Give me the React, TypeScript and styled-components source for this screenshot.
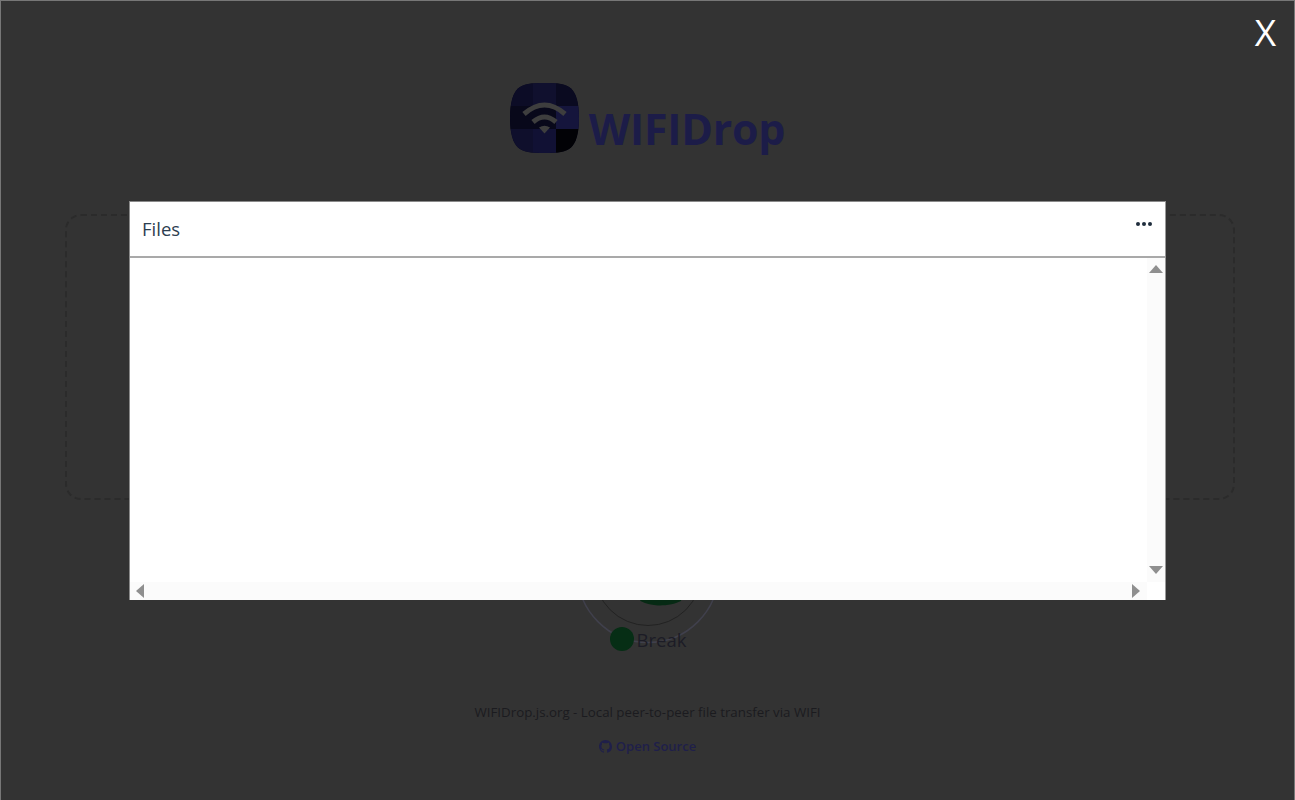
import React from 'react';
import styled, { createGlobalStyle } from 'styled-components';

const GlobalStyle = createGlobalStyle`
  html, body {
    margin: 0;
    padding: 0;
    height: 100%;
    overflow: hidden;
    background: #333;
  }
  * {
    box-sizing: border-box;
  }
`;

const Page = styled.div`
  position: relative;
  width: 1295px;
  height: 800px;
  display: flex;
  flex-direction: column;
  align-items: center;
  padding-top: 82px;
  background: #333;
  border: 1px solid #777;
  border-bottom: none;
  font-family: 'Open Sans', 'Noto Sans', sans-serif;
  overflow: hidden;
`;

const Logo = styled.div`
  display: flex;
  align-items: flex-end;
  gap: 10px;
  height: 70px;
`;

const LogoText = styled.h1`
  margin: 0 0 -2px;
  font-size: 43px;
  line-height: 52px;
  font-weight: 700;
  letter-spacing: -0.3px;
  color: #1c1c48;
`;

const DropZone = styled.div`
  width: 1170px;
  height: 286px;
  margin: 61px 0 0 5px;
  border: 2px dashed #2b2b2b;
  border-radius: 16px;
`;

const Radar = styled.div`
  position: relative;
  width: 150px;
  height: 153px;
`;

const StatusRow = styled.div`
  position: absolute;
  left: 37px;
  bottom: 0;
  display: flex;
  align-items: center;
  gap: 3px;
`;

const StatusDot = styled.span`
  width: 24px;
  height: 24px;
  border-radius: 50%;
  background: #062e15;
`;

const StatusLabel = styled.span`
  padding-top: 2px;
  font-size: 18.5px;
  line-height: 26px;
  color: #1c1c26;
`;

const Tagline = styled.p`
  margin: 49px 0 0;
  font-size: 13.3px;
  line-height: 20px;
  color: #1b1b1f;
`;

const SourceLink = styled.a`
  display: flex;
  align-items: center;
  gap: 4px;
  margin-top: 14px;
  font-size: 13px;
  line-height: 20px;
  font-weight: 600;
  color: #1f1f4a;
`;

const CloseButton = styled.button`
  position: absolute;
  top: 9px;
  right: 18px;
  padding: 0;
  border: none;
  background: none;
  font-family: 'Open Sans', sans-serif;
  font-size: 37px;
  line-height: 44px;
  color: #fff;
  cursor: pointer;
`;

const Modal = styled.section`
  position: absolute;
  left: 128px;
  top: 200px;
  width: 1037px;
  height: 399px;
  display: flex;
  flex-direction: column;
  background: #fff;
  border-top: 1px solid #8a8a8a;
  border-left: 1px solid #8a8a8a;
  border-right: 1px solid #9a9a9a;
`;

const ModalHeader = styled.header`
  height: 56px;
  flex-shrink: 0;
  display: flex;
  justify-content: space-between;
  padding: 14px 13px 0 12px;
  border-bottom: 2px solid #a9a9a9;
`;

const ModalTitle = styled.h2`
  margin: 0;
  font-size: 18.5px;
  line-height: 26px;
  font-weight: 400;
  color: #2c3e50;
`;

const MoreButton = styled.button`
  display: flex;
  gap: 2px;
  height: 6px;
  margin-top: 6px;
  padding: 0;
  border: none;
  background: none;
  cursor: pointer;
`;

const MoreDot = styled.span`
  width: 4px;
  height: 4px;
  border-radius: 50%;
  background: #1f2d3d;
`;

const ModalBody = styled.div`
  flex: 1;
  display: grid;
  grid-template-columns: 1fr 18px;
  grid-template-rows: 1fr 18px;
`;

const Content = styled.div`
  background: #fff;
`;

const VerticalBar = styled.div`
  display: flex;
  flex-direction: column;
  justify-content: space-between;
  align-items: center;
  padding: 7px 0 8px;
  background: #fbfbfb;
`;

const HorizontalBar = styled.div`
  display: flex;
  justify-content: space-between;
  align-items: center;
  padding: 0 7px 0 6px;
  background: #fbfbfb;
`;

const Corner = styled.div`
  background: #fff;
`;

type Direction = 'up' | 'down' | 'left' | 'right';

const Arrow = styled.span<{ $dir: Direction }>`
  width: 0;
  height: 0;
  border-style: solid;
  border-color: transparent;
  ${({ $dir }) =>
    $dir === 'up'
      ? 'border-width: 0 7px 8px; border-bottom-color: #8f8f8f;'
      : $dir === 'down'
        ? 'border-width: 8px 7px 0; border-top-color: #8f8f8f;'
        : $dir === 'left'
          ? 'border-width: 7px 8px 7px 0; border-right-color: #8f8f8f;'
          : 'border-width: 7px 0 7px 8px; border-left-color: #8f8f8f;'}
`;

const LogoIcon = () => (
  <svg width="69" height="70" viewBox="0 0 69 70">
    <defs>
      <clipPath id="squircle">
        <path d="M34.500 0C48 0 56 1 61 5.500S69 20 69 35s-3 25-8 29.500S48 70 34.500 70 13 69 8 64.500 0 50 0 35 3 10 8 5.500 21 0 34.500 0z" />
      </clipPath>
    </defs>
    <g clipPath="url(#squircle)">
      <rect x="0" y="0" width="69" height="70" fill="#0a0a20" />
      <rect x="0" y="0" width="23" height="23" fill="#0c0c26" />
      <rect x="23" y="0" width="23" height="23" fill="#10102e" />
      <rect x="46" y="0" width="23" height="23" fill="#0a0a20" />
      <rect x="0" y="23" width="23" height="23" fill="#08081a" />
      <rect x="23" y="23" width="23" height="23" fill="#08081a" />
      <rect x="46" y="23" width="23" height="23" fill="#15153c" />
      <rect x="0" y="46" width="23" height="24" fill="#0f0f2c" />
      <rect x="23" y="46" width="23" height="24" fill="#111134" />
      <rect x="46" y="46" width="23" height="24" fill="#020206" />
    </g>
    <g fill="none" stroke="#3e3e3e" strokeWidth="5">
      <path d="M14 31Q34.500 13 55 31" />
      <path d="M23 39Q34.500 29 46 39" />
    </g>
    <path d="M29 44.500Q34.500 41 40 44.500L34.500 50.500z" fill="#3e3e3e" />
  </svg>
);

const GithubIcon = () => (
  <svg width="13" height="13" viewBox="0 0 16 16" fill="#1f1f4a">
    <path d="M8 0C3.580 0 0 3.580 0 8c0 3.540 2.290 6.530 5.470 7.590.4.070.55-.17.55-.38 0-.19-.01-.82-.01-1.490-2.010.37-2.530-.49-2.690-.94-.09-.23-.48-.94-.82-1.130-.28-.15-.68-.52-.01-.53.630-.01 1.080.58 1.230.82.720 1.210 1.870.87 2.330.66.070-.52.280-.87.510-1.070-1.780-.2-3.640-.89-3.640-3.950 0-.87.310-1.590.820-2.150-.08-.2-.36-1.020.08-2.120 0 0 .67-.21 2.200.82.640-.18 1.320-.27 2-.27s1.360.09 2 .27c1.530-1.040 2.200-.82 2.200-.82.440 1.100.16 1.920.08 2.120.51.560.82 1.270.82 2.150 0 3.070-1.870 3.750-3.650 3.950.290.250.540.730.540 1.480 0 1.070-.01 1.930-.01 2.200 0 .21.150.46.550.38A8.010 8.010 0 0 0 16 8c0-4.420-3.580-8-8-8z" />
  </svg>
);

const RadarRings = () => (
  <svg width="150" height="153" viewBox="0 0 150 153">
    <circle cx="75" cy="72" r="70.500" fill="none" stroke="#40404c" strokeWidth="1.500" />
    <circle cx="75" cy="72" r="53.500" fill="none" stroke="#222" strokeWidth="1" />
    <path d="M60 81L67.500 101C73 104 80 105 85 105.500 90 105.500 100 105 108 101L112 81z" fill="#062a14" />
  </svg>
);

const App: React.FC = () => {
  return (
    <>
      <GlobalStyle />
      <Page>
        <Logo>
          <LogoIcon />
          <LogoText>WIFIDrop</LogoText>
        </Logo>
        <DropZone />
        <Radar>
          <RadarRings />
          <StatusRow>
            <StatusDot />
            <StatusLabel>Break</StatusLabel>
          </StatusRow>
        </Radar>
        <Tagline>WIFIDrop.js.org - Local peer-to-peer file transfer via WIFI</Tagline>
        <SourceLink>
          <GithubIcon />
          Open Source
        </SourceLink>

        <CloseButton>X</CloseButton>
        <Modal>
          <ModalHeader>
            <ModalTitle>Files</ModalTitle>
            <MoreButton aria-label="More">
              <MoreDot />
              <MoreDot />
              <MoreDot />
            </MoreButton>
          </ModalHeader>
          <ModalBody>
            <Content />
            <VerticalBar>
              <Arrow $dir="up" />
              <Arrow $dir="down" />
            </VerticalBar>
            <HorizontalBar>
              <Arrow $dir="left" />
              <Arrow $dir="right" />
            </HorizontalBar>
            <Corner />
          </ModalBody>
        </Modal>
      </Page>
    </>
  );
};

export default App;
